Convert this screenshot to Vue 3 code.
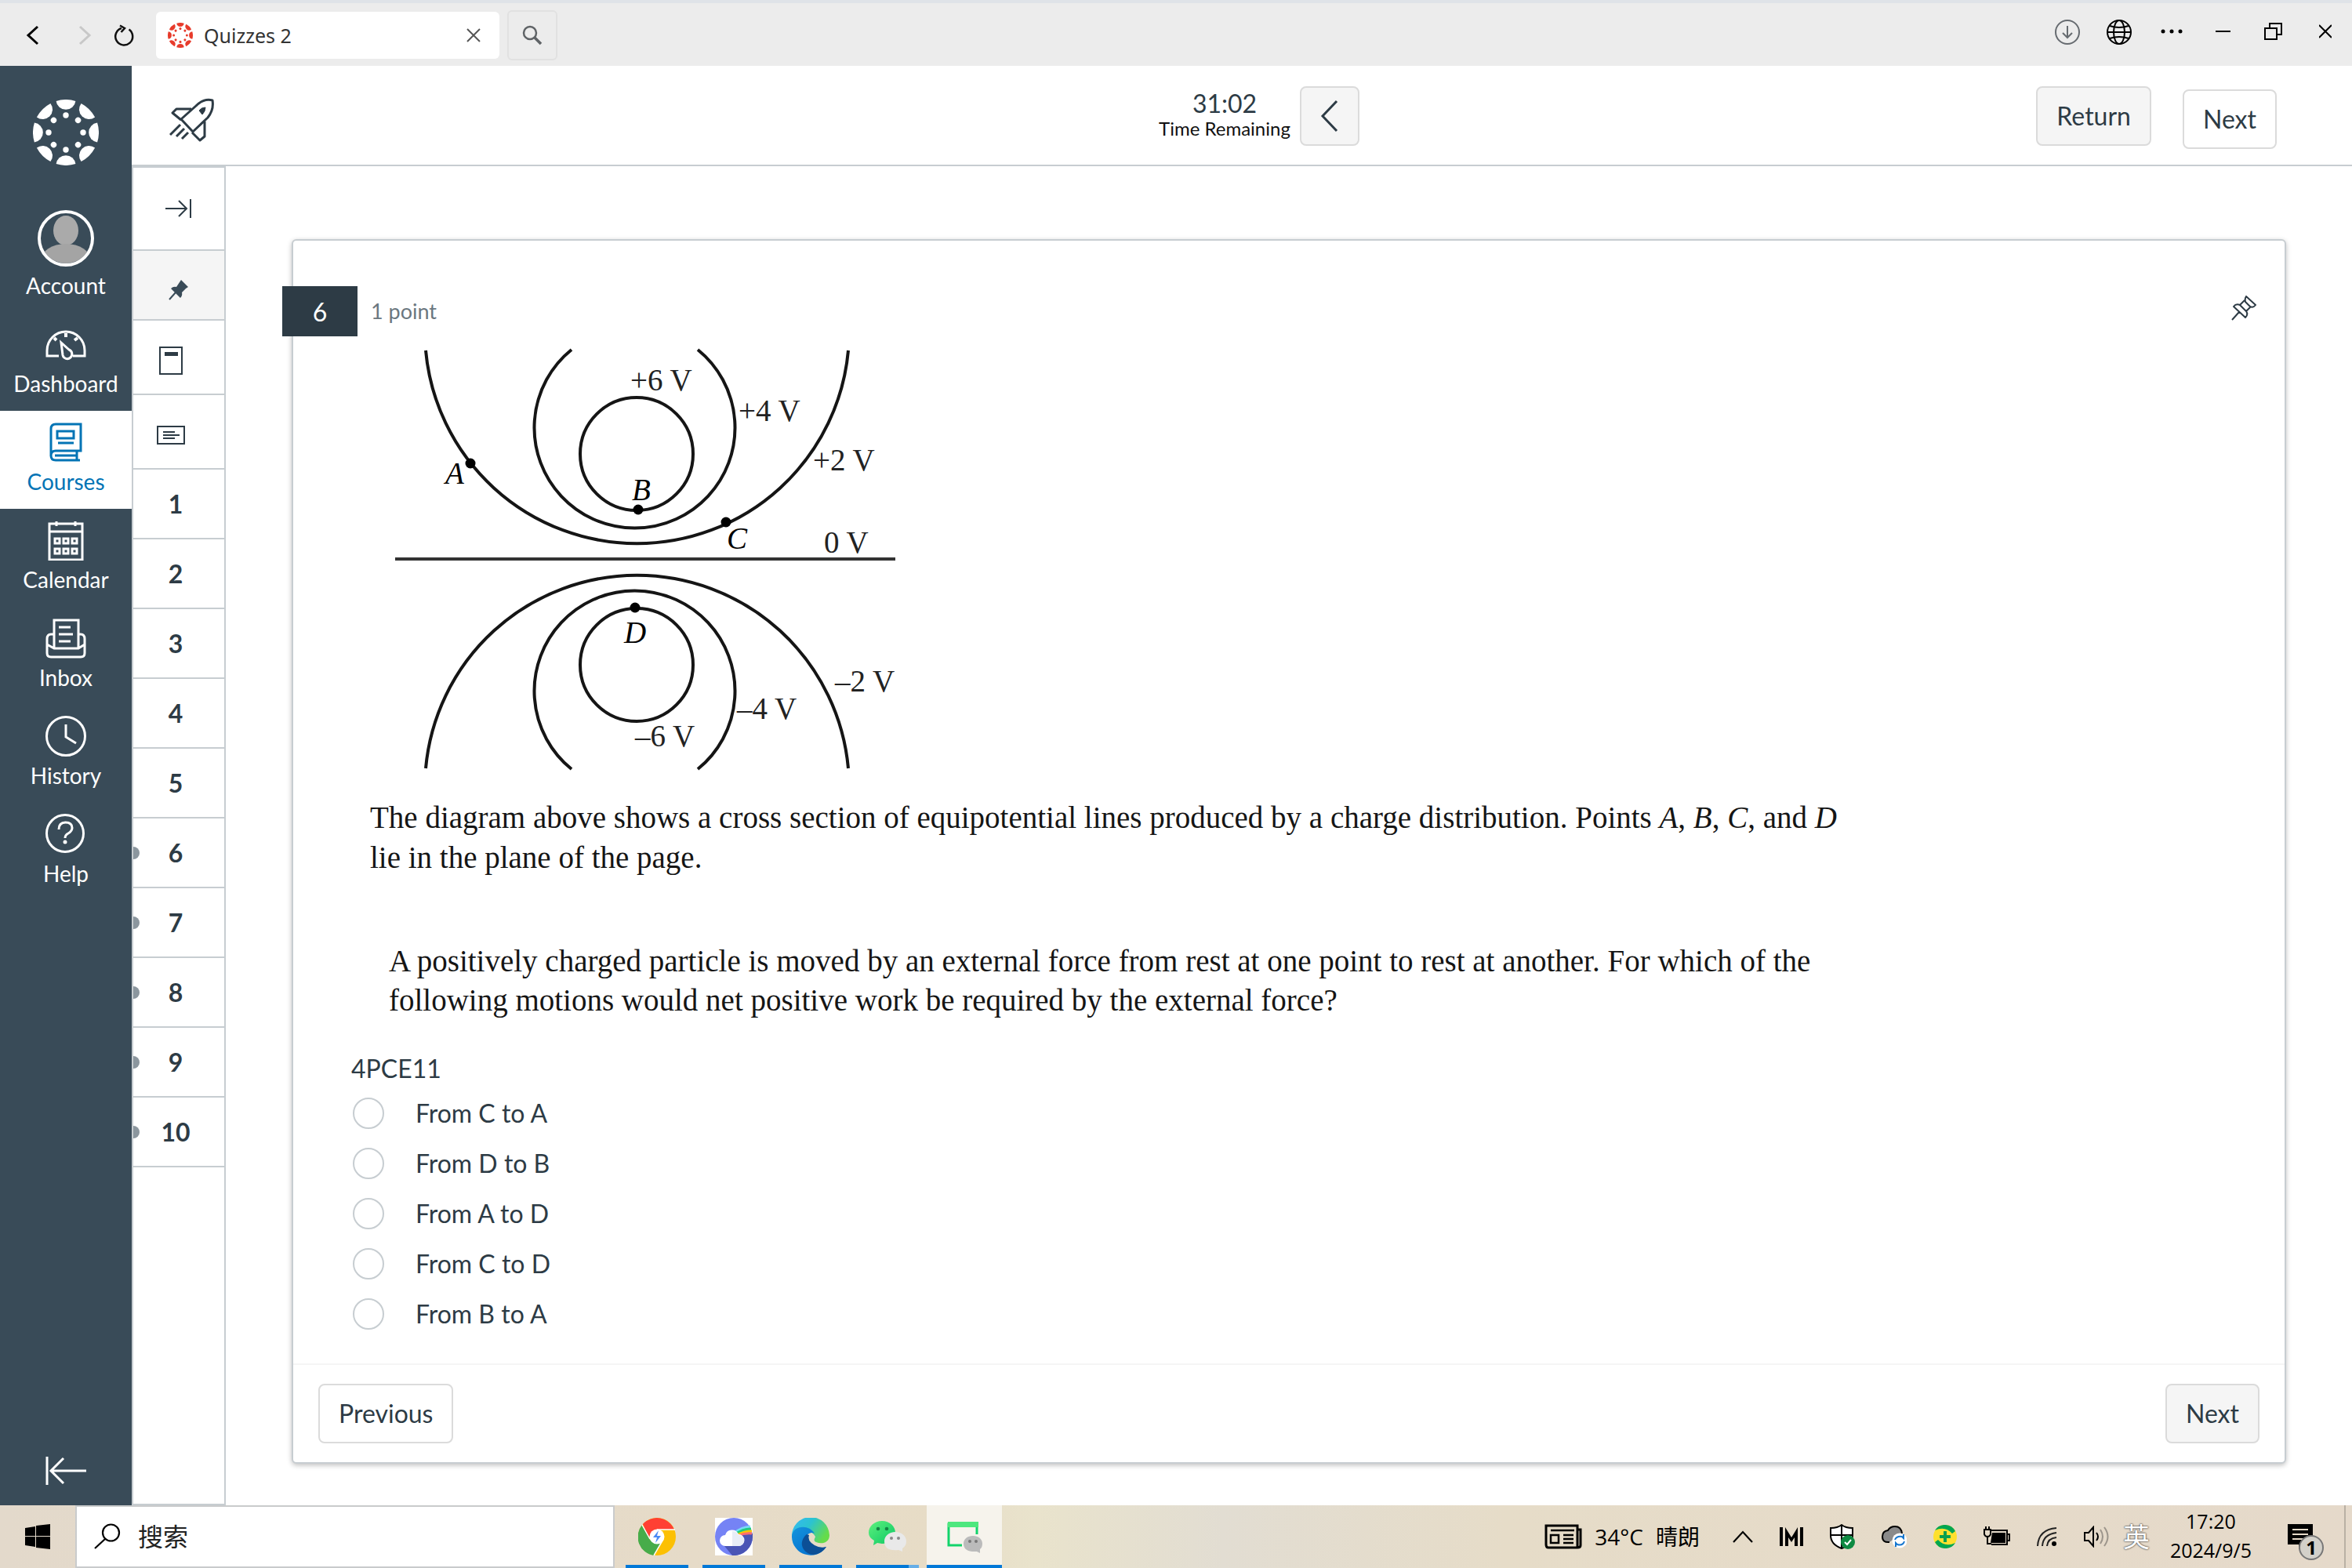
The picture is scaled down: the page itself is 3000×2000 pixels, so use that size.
<script setup>
import { ref } from 'vue'

const angles = [0, 45, 90, 135, 180, 225, 270, 315]
const questions = [1, 2, 3, 4, 5, 6, 7, 8, 9, 10]
const options = ['From C to A', 'From D to B', 'From A to D', 'From C to D', 'From B to A']
const answer = ref(null)
const search = ref('')

const labels = [
  { x: 324, y: 58, text: '+6 V' },
  { x: 462, y: 97, text: '+4 V' },
  { x: 557, y: 160, text: '+2 V' },
  { x: 571, y: 265, text: '0 V' },
  { x: 585, y: 442, text: '–2 V' },
  { x: 460, y: 477, text: '–4 V' },
  { x: 330, y: 512, text: '–6 V' }
]
const points = [
  { name: 'A', cx: 120, cy: 151, x: 88, y: 177 },
  { name: 'B', cx: 334, cy: 210, x: 326, y: 198 },
  { name: 'C', cx: 446, cy: 226, x: 447, y: 260 },
  { name: 'D', cx: 330, cy: 335, x: 316, y: 380 }
]
</script>

<template>
  <div class="screen">
    <header class="browser">
      <div class="browser-nav">
        <button class="plain" aria-label="Back">
          <svg width="24" height="32" viewBox="0 0 24 32"><path d="M18 5 6 16l12 11" fill="none" stroke="#000" stroke-width="3" /></svg>
        </button>
        <button class="plain" aria-label="Forward">
          <svg width="24" height="32" viewBox="0 0 24 32"><path d="M6 5l12 11L6 27" fill="none" stroke="#c8c8c8" stroke-width="3" /></svg>
        </button>
        <button class="plain" aria-label="Reload">
          <svg width="28" height="32" viewBox="0 0 28 32"><path d="M20.500 8.500A11 11 0 1 1 11 7" fill="none" stroke="#111" stroke-width="2.500" /><path d="M9 3.500l6 3.500-4.500 5" fill="none" stroke="#111" stroke-width="2.500" /></svg>
        </button>
      </div>
      <div class="tab">
        <svg width="32" height="32" viewBox="-42 -42 84 84" fill="#e73b2b">
          <g v-for="a in angles" :key="a" :transform="`rotate(${a})`">
            <path d="M-12.400-40.100A42 42 0 0 1 12.400-40.100A12.500 12.500 0 0 1-12.400-40.100z" />
            <circle cy="-22" r="4" />
          </g>
        </svg>
        <span class="tab-title">Quizzes 2</span>
        <button class="plain" aria-label="Close tab">
          <svg width="18" height="18" viewBox="0 0 18 18"><path d="M1 1l16 16M17 1 1 17" stroke="#555" stroke-width="2" /></svg>
        </button>
      </div>
      <button class="tab-search" aria-label="Search">
        <svg width="26" height="26" viewBox="0 0 26 26" fill="none" stroke="#5f6366"><circle cx="10" cy="10" r="8" stroke-width="2.500" /><path d="M16 16l8 8" stroke-width="3.500" /></svg>
      </button>
      <div class="window-tools">
        <button class="plain" aria-label="Downloads">
          <svg width="34" height="34" viewBox="0 0 34 34" fill="none" stroke="#666b70" stroke-width="2"><circle cx="17" cy="17" r="15" /><path d="M17 9v15M11 18l6 6 6-6" /></svg>
        </button>
        <button class="plain" aria-label="Language">
          <svg width="34" height="34" viewBox="0 0 34 34" fill="none" stroke="#000" stroke-width="2"><circle cx="17" cy="17" r="15" /><ellipse cx="17" cy="17" rx="7" ry="15" /><path d="M2 17h30M5 9q12 4 24 0M5 25q12-4 24 0" /></svg>
        </button>
        <button class="plain" aria-label="More">
          <svg width="28" height="34" viewBox="0 0 28 34"><circle cx="3" cy="16" r="2.500" /><circle cx="14" cy="16" r="2.500" /><circle cx="25" cy="16" r="2.500" /></svg>
        </button>
        <button class="plain" aria-label="Minimize">
          <svg width="20" height="34" viewBox="0 0 20 34"><path d="M0 16h19" stroke="#000" stroke-width="2" /></svg>
        </button>
        <button class="plain" aria-label="Restore">
          <svg width="24" height="34" viewBox="0 0 24 34" fill="none" stroke="#000" stroke-width="2"><path d="M1 12h15v14H1zM7 12V6h15v14h-6" /></svg>
        </button>
        <button class="plain" aria-label="Close">
          <svg width="16" height="34" viewBox="0 0 16 34"><path d="M0 8l16 16M16 8 0 24" stroke="#000" stroke-width="2" /></svg>
        </button>
      </div>
    </header>

    <div class="app">
      <nav class="global-nav" aria-label="Global navigation">
        <a class="logo" href="#" aria-label="Canvas">
          <svg width="84" height="84" viewBox="-42 -42 84 84" fill="#fff">
            <g v-for="a in angles" :key="a" :transform="`rotate(${a})`">
              <path d="M-12.400-40.100A42 42 0 0 1 12.400-40.100A12.500 12.500 0 0 1-12.400-40.100z" />
              <circle cy="-22" r="3.700" />
            </g>
          </svg>
        </a>
        <a class="nav-item account" href="#">
          <svg width="72" height="72" viewBox="0 0 72 72">
            <clipPath id="avatar"><circle cx="36" cy="36" r="32" /></clipPath>
            <g clip-path="url(#avatar)" fill="#aaa"><ellipse cx="36" cy="26" rx="16" ry="19" /><ellipse cx="36" cy="64" rx="32" ry="21" fill="#a4a4a4" /></g>
            <circle cx="36" cy="36" r="34" fill="none" stroke="#fff" stroke-width="4" />
          </svg>
          <span>Account</span>
        </a>
        <a class="nav-item" href="#">
          <svg width="52" height="52" viewBox="0 0 52 52" fill="none" stroke="#fff" stroke-width="3">
            <path d="M17 41H2V34a24 24 0 0 1 48 0v7H35" /><path d="M20 24l10 9a6 6 0 1 1-8 7z" /><path d="M26 12v5M11 18l3 3M41 18l-4 3" stroke-width="4" />
          </svg>
          <span>Dashboard</span>
        </a>
        <a class="nav-item active" href="#" aria-current="page">
          <svg width="52" height="52" viewBox="0 0 52 52" fill="none" stroke="#0374b5" stroke-width="3">
            <path d="M7 44V9q0-6 6-6h32v34H13q-6 0-6 6t6 6h31M40 38v11M12 43h28" /><path d="M15 12h21v9H15zM16 27h20" />
          </svg>
          <span>Courses</span>
        </a>
        <a class="nav-item" href="#">
          <svg width="52" height="52" viewBox="0 0 52 52" fill="none" stroke="#fff" stroke-width="3">
            <path d="M5 16V5h42v46H5V15h42M14 2v6M38 2v6" /><path d="M12 24h6v6h-6zM23 24h6v6h-6zM34 24h6v6h-6zM12 37h6v6h-6zM23 37h6v6h-6zM34 37h6v6h-6z" />
          </svg>
          <span>Calendar</span>
        </a>
        <a class="nav-item" href="#">
          <svg width="52" height="52" viewBox="0 0 52 52" fill="none" stroke="#fff" stroke-width="3">
            <path d="M11 38V3h31v35M11 21H7q-5 0-5 6v18q0 5 5 5h38q5 0 5-5V27q0-6-5-6h-3M2 34l9 5h31l8-5M17 12h15M17 21h18M17 30h15" />
          </svg>
          <span>Inbox</span>
        </a>
        <a class="nav-item" href="#">
          <svg width="52" height="52" viewBox="0 0 52 52" fill="none" stroke="#fff" stroke-width="3"><circle cx="26" cy="26" r="24.500" /><path d="M26 11v16l13 8" /></svg>
          <span>History</span>
        </a>
        <a class="nav-item" href="#">
          <svg width="52" height="52" viewBox="0 0 52 52" fill="none" stroke="#fff" stroke-width="3"><circle cx="25" cy="25" r="23.500" /><path d="M17 20q0-9 8.500-9t8.500 7q0 4-5 7-4 2-4 6" /><circle cx="25" cy="36" r="2.500" fill="#fff" stroke="none" /></svg>
          <span>Help</span>
        </a>
        <button class="plain collapse" aria-label="Minimize global navigation">
          <svg width="52" height="40" viewBox="0 0 52 40" fill="none" stroke="#fff" stroke-width="3"><path d="M2 2v36M52 20H8M23 4 7 20l16 16" /></svg>
        </button>
      </nav>

      <div class="workspace">
        <div class="quiz-bar">
          <svg class="rocket" width="58" height="58" viewBox="0 0 58 58" fill="none" stroke="#2d3b45" stroke-width="3" stroke-linejoin="round">
            <path d="M15 27 34 10Q44 0 55 3q2 12-6 22L30 43zM28 14H9l-5 5 11 9M45 30v19l-6 5-10-10" /><path d="M38 16q3-4 8-4 0 5-4 9z" fill="#2d3b45" stroke-width="1" /><path d="M14 34 1 47M19 39 9 49M24 44l-8 8" />
          </svg>
          <div class="timer">
            <div class="timer-text">
              <span class="time">31:02</span>
              <span class="caption">Time Remaining</span>
            </div>
            <button class="btn shaded square" aria-label="Hide timer">
              <svg width="24" height="42" viewBox="0 0 24 42"><path d="M21 2 3 21l18 19" fill="none" stroke="#2d3b45" stroke-width="3" /></svg>
            </button>
          </div>
          <div class="quiz-actions">
            <button class="btn shaded">Return</button>
            <button class="btn lowered">Next</button>
          </div>
        </div>

        <div class="columns">
          <aside class="question-nav">
            <button class="cell first" aria-label="Collapse question list">
              <svg width="34" height="26" viewBox="0 0 34 26" fill="none" stroke="#2d3b45" stroke-width="2"><path d="M0 13h27M17 3l10 10-10 10M32 1v24" /></svg>
            </button>
            <button class="cell pinned" aria-label="Pinned questions">
              <svg width="26" height="26" viewBox="0 0 26 26" fill="#394b58"><path d="M14 3 16 0l9 9-3 2-5 5q1 4-2 7L3 11q3-3 7-2z" /><path d="M9 16 1 25" stroke="#394b58" stroke-width="2" /></svg>
            </button>
            <button class="cell tool" aria-label="Calculator">
              <svg width="30" height="36" viewBox="0 0 30 36"><path d="M1 1h28v34H1z" fill="none" stroke="#2d3b45" stroke-width="2" /><path d="M7 7h17v5H7z" fill="#2d3b45" /></svg>
            </button>
            <button class="cell tool" aria-label="Notes">
              <svg width="36" height="24" viewBox="0 0 36 24" fill="none" stroke="#2d3b45" stroke-width="2"><path d="M1 1h34v22H1zM8 8h15M8 12h21M8 16h15" /></svg>
            </button>
            <button v-for="n in questions" :key="n" class="cell number" :class="{ flagged: n > 5 }">{{ n }}</button>
          </aside>

          <main class="content">
            <section class="card">
              <div class="question-head">
                <span class="badge">6</span>
                <span class="worth">1 point</span>
                <button class="plain pin" aria-label="Pin this question">
                  <svg width="32" height="32" viewBox="0 0 32 32" fill="none" stroke="#2d3b45" stroke-width="2" stroke-linejoin="round"><path d="M19 1 31 12q-3 4-7 2l-6-6q-1-4 1-7zM17 6l-6 6M25 14l-6 6M11 12q-5-2-8 2l15 14q4-4 1-8zM10 21 1 31" /></svg>
                </button>
              </div>

              <div class="stimulus">
                <svg class="diagram" width="680" height="560" viewBox="0 0 680 560">
                  <g fill="none" stroke="#151515" stroke-width="4">
                    <path d="M63 7A270.600 270.600 0 0 0 602 7" />
                    <path d="M249 6A128 128 0 1 0 410 6" />
                    <circle cx="332" cy="139" r="72" />
                    <path d="M24 273H662" stroke="#333" />
                    <path d="M63 540A270.600 270.600 0 0 1 602 540" />
                    <path d="M249 541A128 128 0 1 1 410 541" />
                    <circle cx="332" cy="408" r="72" />
                  </g>
                  <g class="diagram-text">
                    <text v-for="l in labels" :key="l.text" :x="l.x" :y="l.y">{{ l.text }}</text>
                  </g>
                  <g v-for="p in points" :key="p.name" class="diagram-text point">
                    <circle :cx="p.cx" :cy="p.cy" r="6.500" />
                    <text :x="p.x" :y="p.y">{{ p.name }}</text>
                  </g>
                </svg>
                <p class="passage">
                  The diagram above shows a cross section of equipotential lines produced by a charge distribution. Points <i>A</i>, <i>B</i>, <i>C</i>, and <i>D</i><br />lie in the plane of the page.
                </p>
                <p class="prompt">
                  A positively charged particle is moved by an external force from rest at one point to rest at another. For which of the<br />following motions would net positive work be required by the external force?
                </p>
              </div>

              <fieldset class="answers">
                <legend>4PCE11</legend>
                <label v-for="o in options" :key="o" class="option">
                  <input v-model="answer" type="radio" name="answer" :value="o" />
                  <span>{{ o }}</span>
                </label>
              </fieldset>

              <div class="card-foot">
                <button class="btn">Previous</button>
                <button class="btn shaded">Next</button>
              </div>
            </section>
          </main>
        </div>
      </div>
    </div>

    <footer class="taskbar">
      <button class="plain start" aria-label="Start">
        <svg width="32" height="32" viewBox="0 0 32 32"><path d="M0 5l13-2v12H0zM14 2l18-2v15H14zM0 16h13v13L0 27zM14 16h18v16l-18-2z" /></svg>
      </button>
      <label class="search">
        <svg width="34" height="34" viewBox="0 0 34 34" fill="none" stroke="#000" stroke-width="2.200"><circle cx="21.500" cy="12" r="10.500" /><path d="M14 20 1 32" /></svg>
        <input v-model="search" type="text" placeholder="搜索" aria-label="搜索" />
      </label>
      <div class="apps">
        <button class="app-btn" aria-label="Chrome">
          <svg width="48" height="48" viewBox="0 0 48 48">
            <circle cx="24" cy="24" r="24" fill="#fcc003" />
            <path d="M6 8A24 24 0 0 1 46 15H24L13 25z" fill="#ff4033" />
            <path d="M5 9A24 24 0 0 0 20 48L30 31 24 33 15 28z" fill="#47ac4a" />
            <path d="M5 9 15 27M24 15h23M20 48l11-19" stroke="#fff" stroke-width="1.500" />
            <circle cx="24" cy="24" r="9.500" fill="#fff" /><path d="M26 16l-7 9h5l-2 7 7-9h-5z" fill="#4c8bf5" />
          </svg>
        </button>
        <button class="app-btn" aria-label="Cloud drive">
          <svg width="48" height="48" viewBox="0 0 48 48">
            <path d="M0 0h48v48H0z" fill="#fff" /><circle cx="24" cy="24" r="24" fill="#7583f5" />
            <path d="M12 36 34 20h14v4A24 24 0 0 1 22 48z" fill="#4a55b5" />
            <g fill="none" stroke-width="3"><path d="M25 19q9-7 20-8" stroke="#76d9f5" /><path d="M26 21q9-7 20-7" stroke="#20ce7c" /><path d="M28 22q9-5 19-5" stroke="#ffc700" /><path d="M29 23q9-4 18-3" stroke="#ff6d70" /></g>
            <path d="M13 36a7 7 0 0 1 0-14 9 9 0 0 1 17-1 7 7 0 0 1 0 15z" fill="#fff" /><path d="M22 17q6 0 8 5a7 7 0 0 1 0 14h-8z" fill="#e8edf6" />
          </svg>
        </button>
        <button class="app-btn" aria-label="Edge">
          <svg width="48" height="48" viewBox="0 0 48 48">
            <defs>
              <linearGradient id="edge-top" x2="1" y2=".5"><stop offset="0" stop-color="#35b8f5" /><stop offset=".5" stop-color="#2cc3d0" /><stop offset="1" stop-color="#65dc4a" /></linearGradient>
              <linearGradient id="edge-low" y2="1"><stop offset="0" stop-color="#1593dc" /><stop offset="1" stop-color="#0069cc" /></linearGradient>
            </defs>
            <path d="M0 24A24 24 0 0 1 48 22c0 10-10 12-17 9-4-2-2-4-1-7Q20 8 0 24z" fill="url(#edge-top)" />
            <path d="M0 23C2 9 22 8 29 20c-6-3-12 2-11 10 1 9 9 13 26 7A24 24 0 0 1 0 23z" fill="url(#edge-low)" />
            <path d="M19 21c-4 3-7 9-6 14 1 6 7 12 15 12q10-1 16-10-8 2-15-2-10-6-7-13z" fill="#0c4f96" />
          </svg>
        </button>
        <button class="app-btn grouped" aria-label="WeChat">
          <svg width="48" height="48" viewBox="0 0 48 48">
            <defs><linearGradient id="chat" y2="1"><stop offset="0" stop-color="#5df07d" /><stop offset="1" stop-color="#09c763" /></linearGradient></defs>
            <path d="M17 4c10 0 17 7 17 15s-7 14-17 14l-6-1-5 3 1-6q-7-4-7-10C0 11 7 4 17 4z" fill="url(#chat)" />
            <circle cx="12" cy="14" r="2.300" fill="#138344" /><circle cx="23" cy="14" r="2.300" fill="#138344" />
            <path d="M34 18c8 0 14 5 14 12q0 6-5 9v4l-5-2q-18 2-18-11c0-7 6-12 14-12z" fill="#e9e9e9" />
            <circle cx="29" cy="26" r="2" fill="#888" /><circle cx="38" cy="26" r="2" fill="#888" />
          </svg>
        </button>
        <button class="app-btn current" aria-label="WeChat window">
          <svg width="48" height="48" viewBox="0 0 48 48">
            <path d="M21 35H4V8h36v13" fill="none" stroke="#12d36b" stroke-width="3" /><path d="M3 5h39v7H3z" fill="#4ee77e" />
            <path d="M35 23c7 0 12 4 12 10q0 5-3 7v5l-4-2q-17 1-17-10c0-6 5-10 12-10z" fill="#bbb" />
            <circle cx="31" cy="30" r="2" fill="#777" /><circle cx="39" cy="30" r="2" fill="#777" />
          </svg>
        </button>
      </div>
      <div class="tray">
        <button class="plain weather">
          <svg width="48" height="32" viewBox="0 0 48 32" fill="none" stroke="#000" stroke-width="3"><path d="M2 2h40v28H5q-3 0-3-4zM42 7h4v20q0 3-4 3" /><path d="M8 8h30M24 14h13M24 19h13M24 24h13M8 14h10v10H8z" stroke-width="2.500" /></svg>
          <span>34°C</span><span>晴朗</span>
        </button>
        <svg width="26" height="16" viewBox="0 0 26 16" fill="none" stroke="#000" stroke-width="2.200"><path d="M1 15 13 2l12 13" /></svg>
        <svg width="30" height="24" viewBox="0 0 30 24"><path d="M0 0h4v24H0zM26 0h4v24h-4zM7 0l8 13L23 0v24h-4V13l-4 6-4-6v11H7z" /></svg>
        <svg width="32" height="32" viewBox="0 0 32 32"><path d="M15 1q5 4 14 4v9q0 12-14 17Q1 26 1 14V5q9 0 14-4z" fill="#fff" stroke="#000" stroke-width="2" /><path d="M15 1v30M1 14h28" stroke="#000" stroke-width="2" /><circle cx="23" cy="23" r="9" fill="#0e8a42" /><path d="M19 23l3 3 5-6" fill="none" stroke="#fff" stroke-width="2" /></svg>
        <svg width="32" height="30" viewBox="0 0 32 30"><path d="M10 22Q1 23 1 15q0-7 7-8 3-5 9-5 8 0 9 9" fill="#8a8a8a" stroke="#000" stroke-width="2" /><circle cx="23" cy="20" r="9.500" fill="#fff" /><path d="M17 19q2-5 9-4l2 2v-5M29 21q-2 6-9 4l-2-2v5" fill="none" stroke="#1677cf" stroke-width="2" /></svg>
        <svg width="30" height="30" viewBox="0 0 30 30"><circle cx="15" cy="15" r="15" fill="#ffe02e" /><path d="M2 7A15 15 0 0 1 28 8L24 11Q15 1 2 7zM28 23A15 15 0 0 1 2 22l4-3q9 10 22 4z" fill="#00a651" /><path d="M15 8v14M8 15h14" stroke="#0aa04e" stroke-width="4" /></svg>
        <svg width="34" height="26" viewBox="0 0 34 26"><path d="M8 5h22v18H10M30 10h3v8h-3" fill="none" stroke="#000" stroke-width="2" /><path d="M11 8h17v13H9z" /><path d="M1 4h8v6q-1 3-4 3t-4-3zM3 0v4M7 0v4M5 12v10h5" fill="#e5dac9" stroke="#000" stroke-width="2" /></svg>
        <svg width="26" height="26" viewBox="0 0 26 26" fill="none" stroke="#222" stroke-width="2"><path d="M1 25Q2 4 25 2M7 25Q8 10 25 8M13 25q1-10 12-11" /><circle cx="22" cy="22" r="3" fill="#000" stroke="none" /></svg>
        <svg width="34" height="28" viewBox="0 0 34 28" fill="none" stroke="#000" stroke-width="2"><path d="M1 9h5l6-7v24l-6-7H1z" /><path d="M16 9q4 5 0 10" /><path d="M21 5q6 9 0 18M26 2q9 12 0 24" stroke="#9c958b" /></svg>
        <span class="ime">英</span>
        <div class="clock"><span>17:20</span><span>2024/9/5</span></div>
        <button class="plain notices" aria-label="Notifications">
          <svg width="32" height="32" viewBox="0 0 32 32"><path d="M0 0h32v26H20l-6 6v-6H0z" /><path d="M6 7h20M6 13h20M6 19h14" stroke="#e5dac9" stroke-width="2" /></svg>
          <span class="count">1</span>
        </button>
      </div>
      <button class="plain show-desktop" aria-label="Show desktop"></button>
    </footer>
  </div>
</template>

<style>
body {
  margin: 0;
  background: #fff;
}
</style>

<style scoped>
.screen {
  display: flex;
  flex-direction: column;
  min-height: 100vh;
  font-family: Lato, "Noto Sans CJK SC", sans-serif;
  font-size: 32px;
  line-height: 40px;
  color: #2d3b45;
}
.screen * {
  box-sizing: border-box;
}
svg {
  display: block;
  flex: none;
}
a {
  color: inherit;
  text-decoration: none;
}
button,
input {
  margin: 0;
  font: inherit;
  color: inherit;
}
.plain {
  display: flex;
  align-items: center;
  padding: 0;
  border: 0;
  background: none;
}

/* browser chrome */
.browser {
  display: flex;
  align-items: center;
  height: 84px;
  padding: 4px 26px 2px 30px;
  border-top: 4px solid #dfe3e8;
  background: #ececec;
}
.browser-nav {
  display: flex;
  gap: 42px;
  width: 169px;
}
.browser-nav .plain:last-child {
  margin-left: -18px;
}
.tab {
  display: flex;
  align-items: center;
  gap: 14px;
  width: 438px;
  height: 60px;
  padding: 0 24px 0 15px;
  border-radius: 6px;
  background: #fff;
}
.tab-title {
  flex: 1;
  font-family: "Noto Sans", sans-serif;
  font-size: 25px;
  color: #333;
}
.tab-search {
  display: flex;
  align-items: center;
  justify-content: center;
  width: 64px;
  height: 64px;
  margin-left: 10px;
  border: 2px solid #e1e1e1;
  border-radius: 6px;
  background: none;
}
.window-tools {
  display: flex;
  align-items: center;
  gap: 42px;
  margin-left: auto;
  padding-bottom: 8px;
}
.window-tools .plain:first-child {
  margin-right: -10px;
}
.window-tools .plain:nth-child(2) {
  margin-right: -6px;
}
.window-tools .plain:nth-last-child(2) {
  margin-right: 4px;
}

/* global navigation */
.app {
  display: flex;
  flex: 1;
}
.global-nav {
  display: flex;
  flex-direction: column;
  flex: none;
  width: 168px;
  background: #394b58;
  color: #fff;
}
.logo {
  display: flex;
  justify-content: center;
  padding: 43px 0 57px;
}
.nav-item {
  display: flex;
  flex-direction: column;
  align-items: center;
  gap: 8px;
  height: 125px;
  padding-top: 14px;
  font-size: 28px;
  line-height: 32px;
}
.nav-item.account {
  height: 131px;
  padding-top: 0;
}
.nav-item.active {
  background: #fff;
  color: #0374b5;
}
.collapse {
  justify-content: center;
  margin: auto 0 24px;
}

/* quiz bar */
.workspace {
  display: flex;
  flex-direction: column;
  flex: 1;
  min-width: 0;
}
.quiz-bar {
  display: grid;
  grid-template-columns: 1fr auto 1fr;
  align-items: center;
  height: 128px;
  padding: 2px 0 0 44px;
  border-bottom: 2px solid #c7cdd1;
}
.rocket {
  margin: 12px 0 0 4px;
}
.timer {
  display: flex;
  align-items: center;
  gap: 12px;
}
.timer-text {
  display: flex;
  flex-direction: column;
  align-items: center;
  padding-bottom: 4px;
}
.time {
  line-height: 36px;
}
.caption {
  font-size: 24px;
  line-height: 28px;
  color: #111;
}
.quiz-actions {
  display: flex;
  justify-content: flex-end;
  align-items: center;
  gap: 40px;
  padding-right: 96px;
}
.btn {
  display: flex;
  align-items: center;
  justify-content: center;
  height: 76px;
  padding: 0 24px;
  border: 2px solid #dbdbdb;
  border-radius: 8px;
  background: #fff;
}
.shaded {
  background: #f5f5f5;
}
.square {
  width: 76px;
  padding: 0;
}
.lowered {
  margin: 8px 0 0;
}

/* question navigation */
.columns {
  display: flex;
  flex: 1;
}
.question-nav {
  flex: none;
  width: 120px;
  border: 2px solid #c7cdd1;
}
.cell {
  display: flex;
  align-items: center;
  justify-content: center;
  width: 100%;
  height: 89px;
  padding: 0 8px 0 0;
  border: 0;
  border-bottom: 2px solid #c7cdd1;
  background: #fff;
}
.cell.first {
  height: 106px;
  padding: 0;
}
.cell.pinned {
  padding: 12px 0 0;
  background: #f5f5f5;
}
.cell.tool {
  height: 95px;
  padding: 8px 20px 0 0;
}
.number {
  position: relative;
  font-weight: 700;
}
.flagged::before {
  content: "";
  position: absolute;
  left: 0;
  width: 8px;
  height: 16px;
  border-radius: 0 8px 8px 0;
  background: #8b969e;
}

/* question card */
.content {
  flex: 1;
  padding: 93px 84px 51px 84px;
}
.card {
  border: 2px solid #c7cdd1;
  border-radius: 6px;
  background: #fff;
  box-shadow: 0 2px 6px rgba(0, 0, 0, 0.25);
}
.question-head {
  display: flex;
  align-items: center;
  margin-left: -14px;
  padding: 58px 36px 0 0;
}
.badge {
  width: 96px;
  height: 64px;
  background: #2d3b45;
  color: #fff;
  line-height: 66px;
  text-align: center;
}
.worth {
  margin-left: 17px;
  font-size: 27px;
  color: #6b7780;
}
.pin {
  margin: 0 0 8px auto;
}
.stimulus {
  padding: 11px 0 0 98px;
  font-family: "Liberation Serif", serif;
  font-size: 39px;
  color: #151515;
}
.diagram {
  margin-left: 8px;
}
.diagram-text {
  font-family: "Liberation Serif", serif;
  font-size: 39px;
  fill: #222;
}
.point {
  font-style: italic;
  fill: #000;
}
.passage {
  margin: 17px 0 0;
  line-height: 51px;
}
.prompt {
  margin: 82px 0 0 24px;
  line-height: 50px;
}
.answers {
  margin: 42px 0 31px 74px;
  padding: 0;
  border: 0;
}
.answers legend {
  margin-bottom: 5px;
  padding: 0;
}
.option {
  display: flex;
  align-items: center;
  gap: 40px;
  width: max-content;
  height: 64px;
  padding-left: 2px;
}
.option input {
  appearance: none;
  width: 40px;
  height: 40px;
  border: 2px solid #c7cdd1;
  border-radius: 50%;
  background: #fff;
}
.option input:checked {
  border: 12px solid #2d3b45;
}
.card-foot {
  display: flex;
  justify-content: space-between;
  padding: 24px 32px;
  border-top: 2px solid #f5f5f5;
}

/* taskbar */
.taskbar {
  display: flex;
  height: 80px;
  background: linear-gradient(90deg, #e3d9cb, #e6dbc8 30%, #e7dcc6 40%, #e9e3cc 44%, #e2ddd2 52%, #e6dcc8 64%, #e5d9ca);
  font-family: "Open Sans", "Noto Sans CJK SC", sans-serif;
  color: #000;
}
.start {
  justify-content: center;
  width: 96px;
}
.search {
  display: flex;
  align-items: center;
  gap: 22px;
  width: 688px;
  padding-left: 22px;
  border: 2px solid #c9cbcc;
  background: #fff;
}
.search input {
  flex: 1;
  min-width: 0;
  padding: 0;
  border: 0;
  outline: 0;
  background: none;
}
.search input::placeholder {
  color: #222;
  opacity: 1;
}
.apps {
  display: flex;
  gap: 18px;
  margin-left: 14px;
}
.app-btn {
  display: flex;
  align-items: center;
  justify-content: center;
  width: 80px;
  height: 80px;
  padding: 4px 0 0;
  border: 0;
  border-bottom: 4px solid #0078d7;
  background: none;
}
.grouped {
  border-image: linear-gradient(90deg, #0078d7 80%, #66aee7 80%) 4;
}
.current {
  width: 96px;
  margin-left: -8px;
  background: #f6f3ec;
}
.tray {
  display: flex;
  align-items: center;
  gap: 34px;
  margin-left: auto;
  padding-right: 40px;
}
.weather {
  gap: 16px;
  margin-right: 8px;
  font-size: 28px;
}
.ime {
  margin: 0 -8px 0 -18px;
  font-size: 34px;
  color: #fff;
  text-shadow: 0 0 2px #444, 0 0 2px #444;
}
.clock {
  display: flex;
  flex-direction: column;
  align-items: center;
  padding-bottom: 2px;
  font-size: 25px;
  line-height: 37px;
}
.notices {
  position: relative;
  margin-left: 12px;
}
.count {
  position: absolute;
  top: 14px;
  left: 14px;
  width: 32px;
  height: 32px;
  border: 2px solid #777;
  border-radius: 50%;
  background: #d3d0c9;
  font-size: 24px;
  font-weight: 700;
  line-height: 28px;
  text-align: center;
}
.show-desktop {
  width: 10px;
  border-left: 2px solid #b9b0a4;
}
</style>
